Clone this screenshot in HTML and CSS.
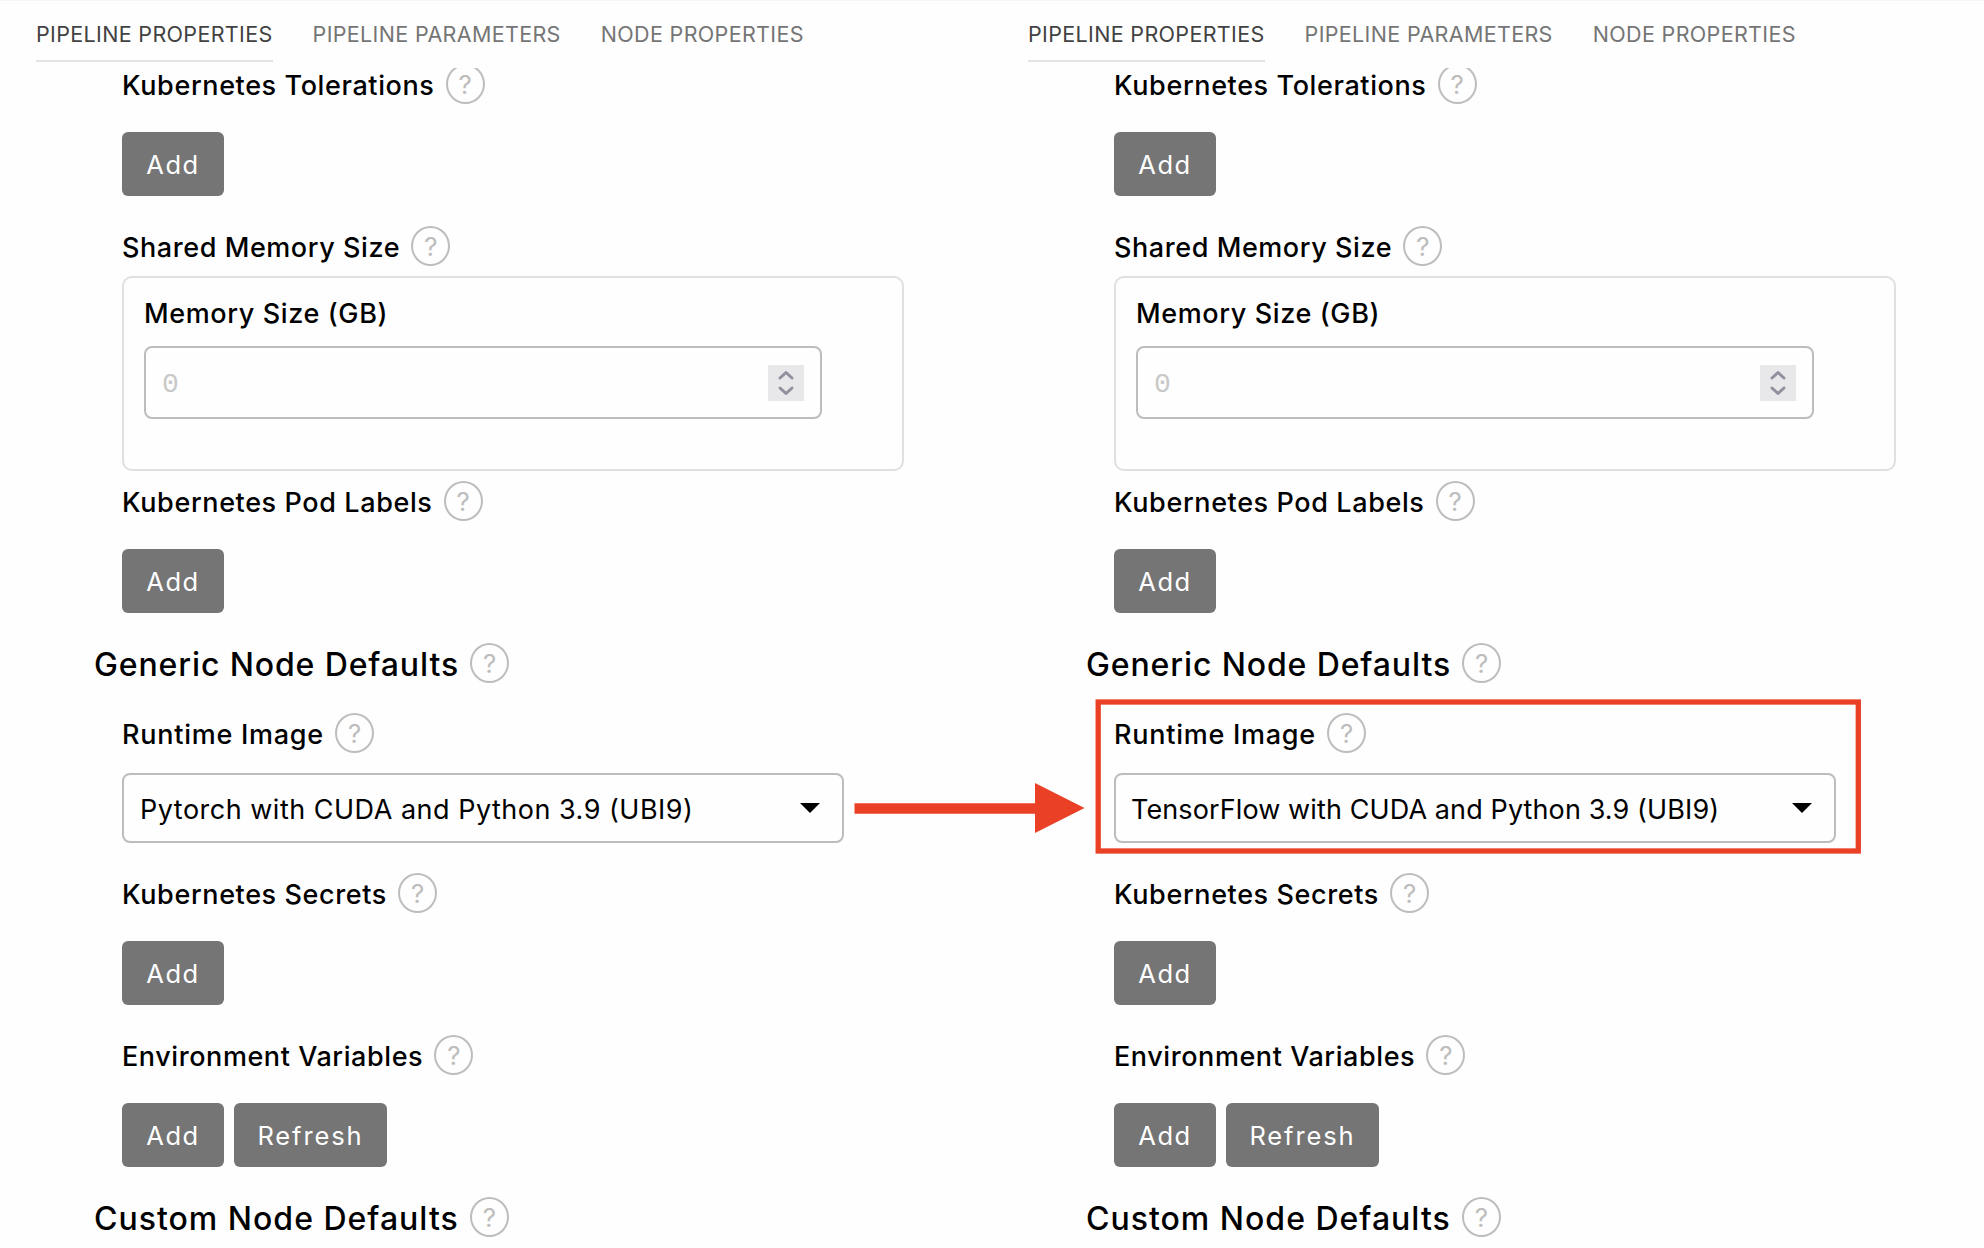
FILE: index.html
```html
<!DOCTYPE html>
<html lang="en">
<head>
<meta charset="utf-8">
<title>Pipeline Properties</title>
<link rel="stylesheet" href="styles.css">
</head>
<body>
<main class="compare">
  <section class="panel">
    <nav class="tabs">
      <a class="tab tab-active">PIPELINE PROPERTIES</a>
      <a class="tab">PIPELINE PARAMETERS</a>
      <a class="tab">NODE PROPERTIES</a>
    </nav>
    <div class="scroller">
      <div class="form">
        <div class="label"><span>Kubernetes Tolerations</span><i class="help">?</i></div>
        <div class="actions"><button class="btn">Add</button></div>
        <div class="label label-tight"><span>Shared Memory Size</span><i class="help">?</i></div>
        <div class="group">
          <div class="group-label">Memory Size (GB)</div>
          <div class="number">
            <span class="placeholder">0</span>
            <svg class="spinner" viewBox="0 0 36 36"><path d="M12 13l6-5.5 6 5.5M12 23l6 5.5 6-5.5"/></svg>
          </div>
        </div>
        <div class="label label-after-group"><span>Kubernetes Pod Labels</span><i class="help">?</i></div>
        <div class="actions"><button class="btn">Add</button></div>
        <h2 class="heading"><span>Generic Node Defaults</span><i class="help">?</i></h2>
        <div class="label label-wide"><span>Runtime Image</span><i class="help">?</i></div>
        <div class="select">
          <span class="value">Pytorch with CUDA and Python 3.9 (UBI9)</span>
          <svg class="caret" viewBox="0 0 20 10"><path d="M0 0h20L10 10z"/></svg>
        </div>
        <div class="label"><span>Kubernetes Secrets</span><i class="help">?</i></div>
        <div class="actions"><button class="btn">Add</button></div>
        <div class="label label-tight"><span>Environment Variables</span><i class="help">?</i></div>
        <div class="actions"><button class="btn">Add</button><button class="btn btn-refresh">Refresh</button></div>
        <h2 class="heading heading-wide"><span>Custom Node Defaults</span><i class="help">?</i></h2>
      </div>
    </div>
  </section>
  <section class="panel">
    <nav class="tabs">
      <a class="tab tab-active">PIPELINE PROPERTIES</a>
      <a class="tab">PIPELINE PARAMETERS</a>
      <a class="tab">NODE PROPERTIES</a>
    </nav>
    <div class="scroller">
      <div class="form">
        <div class="label"><span>Kubernetes Tolerations</span><i class="help">?</i></div>
        <div class="actions"><button class="btn">Add</button></div>
        <div class="label label-tight"><span>Shared Memory Size</span><i class="help">?</i></div>
        <div class="group">
          <div class="group-label">Memory Size (GB)</div>
          <div class="number">
            <span class="placeholder">0</span>
            <svg class="spinner" viewBox="0 0 36 36"><path d="M12 13l6-5.5 6 5.5M12 23l6 5.5 6-5.5"/></svg>
          </div>
        </div>
        <div class="label label-after-group"><span>Kubernetes Pod Labels</span><i class="help">?</i></div>
        <div class="actions"><button class="btn">Add</button></div>
        <h2 class="heading"><span>Generic Node Defaults</span><i class="help">?</i></h2>
        <div class="label label-wide"><span>Runtime Image</span><i class="help">?</i></div>
        <div class="select">
          <span class="value value-long">TensorFlow with CUDA and Python 3.9 (UBI9)</span>
          <svg class="caret" viewBox="0 0 20 10"><path d="M0 0h20L10 10z"/></svg>
        </div>
        <div class="label"><span>Kubernetes Secrets</span><i class="help">?</i></div>
        <div class="actions"><button class="btn">Add</button></div>
        <div class="label label-tight"><span>Environment Variables</span><i class="help">?</i></div>
        <div class="actions"><button class="btn">Add</button><button class="btn btn-refresh">Refresh</button></div>
        <h2 class="heading heading-wide"><span>Custom Node Defaults</span><i class="help">?</i></h2>
      </div>
    </div>
  </section>
  <svg class="annotation" viewBox="0 0 1984 1248">
    <path class="arrow" d="M854.5 803.3H1035V783L1084.5 808 1035 833V813.7H854.5z"/>
    <rect class="frame" x="1098.2" y="702" width="760.1" height="149"/>
  </svg>
</main>
</body>
</html>
```
FILE: styles.css
```css
* {
  box-sizing: border-box;
}

body {
  margin: 0;
  background: #fefefe;
  color: #000;
  font-family: Inter, "Liberation Sans", sans-serif;
}

.compare {
  position: relative;
  display: grid;
  grid-template-columns: 1fr 1fr;
  height: 1248px;
  overflow: hidden;
}

.panel {
  display: flex;
  flex-direction: column;
  min-width: 0;
  height: 1248px;
  border-top: 1px solid #f5f5f5;
}

.tabs {
  display: flex;
  flex: none;
  gap: 40px;
  height: 67px;
  padding: 0 36px;
}

.tab {
  height: 61px;
  padding-top: 13px;
  border-bottom: 2px solid transparent;
  color: #757575;
  font-size: 21.5px;
  line-height: 40px;
  letter-spacing: 0.34px;
  white-space: nowrap;
}

.tab-active {
  border-bottom-color: #e4e4e4;
  color: #424242;
}

.scroller {
  flex: 1;
  overflow: hidden;
}

.form {
  margin-top: -4px;
  padding-left: 122px;
}

.label,
.heading {
  display: flex;
  align-items: center;
  gap: 11.2px;
  height: 40px;
  margin: 30px 0 0;
  font-size: 27px;
  font-weight: 500;
  line-height: 36px;
  letter-spacing: 0.61px;
  white-space: nowrap;
}

.label:first-child {
  margin-top: 0;
}

.label span,
.heading span {
  padding-top: 4px;
}

.label-tight {
  letter-spacing: 0.57px;
}

.label-wide {
  letter-spacing: 0.74px;
}

.label-after-group {
  margin-top: 10px;
}

.heading {
  margin-left: -28px;
  font-size: 32px;
  letter-spacing: 0.88px;
}

.heading-wide {
  letter-spacing: 1px;
}

.help {
  width: 39px;
  height: 40px;
  padding-top: 1px;
  border: 2px solid #bdbdbd;
  border-radius: 50%;
  color: #bdbdbd;
  font-size: 26px;
  font-style: normal;
  font-weight: 400;
  line-height: 36px;
  letter-spacing: 0;
  text-align: center;
}

.actions {
  display: flex;
  gap: 10px;
  margin-top: 28px;
}

.btn {
  width: 102px;
  height: 64px;
  padding: 1px 0 0;
  border: 0;
  border-radius: 6px;
  background: #757575;
  color: #fff;
  font: 400 25.5px/40px Inter, "Liberation Sans", sans-serif;
  letter-spacing: 1.5px;
}

.btn-refresh {
  width: 153px;
  letter-spacing: 1.9px;
}

.group {
  width: 782px;
  height: 195px;
  margin-top: 10px;
  padding: 16px 20px;
  border: 2px solid #e0e0e0;
  border-radius: 10px;
}

.group-label {
  font-size: 27px;
  font-weight: 500;
  line-height: 40px;
  letter-spacing: 0.62px;
}

.number {
  display: flex;
  align-items: center;
  justify-content: space-between;
  width: 678px;
  height: 73px;
  margin-top: 12px;
  padding: 0 16px;
  border: 2px solid #bdbdbd;
  border-radius: 8px;
}

.placeholder {
  padding-top: 5px;
  color: #c9c9c9;
  font: 28px/36px "Liberation Mono", monospace;
}

.spinner {
  width: 36px;
  height: 36px;
  background: #e8e8ea;
}

.spinner path {
  fill: none;
  stroke: #8f8f9d;
  stroke-width: 3;
  stroke-linecap: round;
  stroke-linejoin: round;
}

.select {
  display: flex;
  align-items: center;
  justify-content: space-between;
  width: 722px;
  height: 70px;
  margin-top: 20px;
  padding: 0 22px 0 16px;
  border: 2px solid #bdbdbd;
  border-radius: 8px;
}

.value {
  padding-top: 4px;
  font-size: 27px;
  line-height: 40px;
  letter-spacing: 0.5px;
  white-space: nowrap;
}

.value-long {
  margin-left: -1px;
  letter-spacing: 0.11px;
}

.caret {
  width: 20px;
  height: 10px;
}

.annotation {
  position: absolute;
  inset: 0;
  width: 1984px;
  height: 1248px;
  pointer-events: none;
}

.arrow {
  fill: #ea4025;
}

.frame {
  fill: none;
  stroke: #ea4025;
  stroke-width: 5.3;
}
```
